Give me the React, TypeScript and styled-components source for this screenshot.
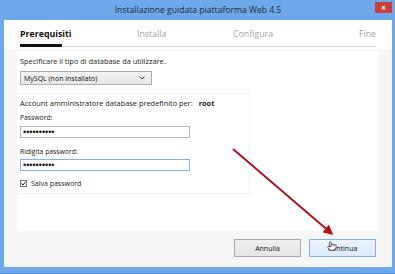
import React from 'react'
import styled, { createGlobalStyle } from 'styled-components'
import { Pointer } from 'lucide-react'

const GlobalStyle = createGlobalStyle`
  html, body {
    margin: 0;
    padding: 0;
    background: #ffffff;
  }
  body {
    font-family: "Open Sans", "Noto Sans", sans-serif;
    color: #1c1c1c;
  }
`

const Window = styled.div`
  position: relative;
  width: 395px;
  height: 274px;
  box-sizing: border-box;
  background: #6fa8ea;
  padding: 0 3px 6px 4px;
  display: flex;
  flex-direction: column;
  border-bottom: 1px solid #4f8fd6;
`

const TitleBar = styled.div`
  height: 20px;
  display: flex;
  align-items: center;
  justify-content: center;
  position: relative;
  font-size: 8.6px;
  color: #1e2a38;
`

const CloseButton = styled.div`
  position: absolute;
  right: 0;
  top: 2px;
  width: 17px;
  height: 11px;
  background: #c7403a;
  color: #fff;
  font-size: 8px;
  font-weight: bold;
  display: flex;
  align-items: center;
  justify-content: center;
`

const Client = styled.div`
  flex: 1;
  background: #f6f6f6;
  display: flex;
  flex-direction: column;
`

const Header = styled.div`
  background: #ffffff;
  padding: 6px 16px 2px 16px;
`

const Steps = styled.div`
  display: grid;
  grid-template-columns: 117px 96px 1fr auto;
  align-items: center;
  height: 16px;
`

const Step = styled.span<{ $active?: boolean }>`
  font-size: 8.8px;
  font-weight: ${p => (p.$active ? 700 : 400)};
  color: ${p => (p.$active ? '#111' : '#a3a3a3')};
`

const Track = styled.div`
  position: relative;
  height: 3px;
  margin-top: 2px;
  display: flex;
  align-items: flex-end;
`

const TrackLine = styled.div`
  flex: 1;
  height: 1px;
  background: #cfd8e2;
`

const TrackDone = styled.div`
  width: 42px;
  height: 3px;
  background: #111;
`

const Body = styled.div`
  flex: 1;
  display: flex;
  flex-direction: column;
  padding: 2px 14px 0 13px;
`

const Panel = styled.div`
  background: #ffffff;
  height: 180px;
  padding: 6px 3px 0 3px;
  box-sizing: border-box;
`

const Label = styled.div<{ $small?: boolean }>`
  font-size: ${p => (p.$small ? '6.8px' : '7.4px')};
  color: #222;
  line-height: 1.1;
`

const Select = styled.div`
  margin-top: 6px;
  width: 132px;
  height: 14px;
  box-sizing: border-box;
  border: 1px solid #acacac;
  background: linear-gradient(#f4f4f4, #e6e6e6);
  display: flex;
  align-items: center;
  justify-content: space-between;
  padding: 0 6px 0 3px;
  font-size: 7px;
  color: #111;
`

const Account = styled.div`
  margin-top: 8px;
  margin-left: -3px;
  width: 233px;
  padding: 5px 3px 5px 3px;
  border-top: 1px solid #f4f4f4;
  border-right: 1px solid #f2f2f2;
  border-bottom: 1px solid #f4f4f4;
  box-sizing: border-box;
`

const Root = styled.b`
  margin-left: 6px;
  font-weight: 700;
`

const Field = styled.div<{ $space: number }>`
  margin-top: ${p => p.$space}px;
  display: flex;
  flex-direction: column;
  gap: 4px;
`

const PasswordBox = styled.input<{ $focus?: boolean }>`
  width: 170px;
  height: 12px;
  box-sizing: border-box;
  border: 1px solid ${p => (p.$focus ? '#7eb4ea' : '#b5b8be')};
  padding: 0 2px;
  margin: 0;
  font-size: 9px;
  letter-spacing: 0;
  color: #111;
  background: #fff;
  outline: none;
`

const CheckRow = styled.label`
  margin-top: 8px;
  display: flex;
  align-items: center;
  gap: 4px;
  font-size: 7px;
  color: #222;
`

const CheckBox = styled.span`
  width: 7px;
  height: 7px;
  box-sizing: border-box;
  border: 1px solid #707070;
  background: #fff;
  display: flex;
  align-items: center;
  justify-content: center;
`

const Footer = styled.div`
  flex: 1;
  display: flex;
  justify-content: flex-end;
  align-items: flex-start;
  gap: 8px;
  padding: 8px 2px 0 0;
`

const Button = styled.div<{ $primary?: boolean }>`
  width: 67px;
  height: 18px;
  box-sizing: border-box;
  border: 1px solid ${p => (p.$primary ? '#7eb4ea' : '#acacac')};
  background: ${p => (p.$primary ? 'linear-gradient(#ecf4fc, #dcecfc)' : 'linear-gradient(#f0f0f0, #e5e5e5)')};
  font-size: 7px;
  color: #111;
  display: flex;
  align-items: center;
  justify-content: center;
`

const Overlay = styled.svg`
  position: absolute;
  left: 0;
  top: 0;
  pointer-events: none;
`

const Cursor = styled.div`
  position: absolute;
  left: 327px;
  top: 241px;
  display: flex;
`

export default function App() {
  return (
    <>
      <GlobalStyle />
      <Window>
        <TitleBar>
          Installazione guidata piattaforma Web 4.5
          <CloseButton>×</CloseButton>
        </TitleBar>
        <Client>
          <Header>
            <Steps>
              <Step $active>Prerequisiti</Step>
              <Step>Installa</Step>
              <Step>Configura</Step>
              <Step>Fine</Step>
            </Steps>
            <Track>
              <TrackDone />
              <TrackLine />
            </Track>
          </Header>
          <Body>
            <Panel>
              <Label>Specificare il tipo di database da utilizzare.</Label>
              <Select>
                <span>MySQL (non installato)</span>
                <svg width="6" height="4" viewBox="0 0 6 4">
                  <path d="M0.5 0.5 L3 3 L5.5 0.5" fill="none" stroke="#333" strokeWidth="1" />
                </svg>
              </Select>
              <Account>
                <Label>
                  Account amministratore database predefinito per:<Root>root</Root>
                </Label>
                <Field $space={7}>
                  <Label $small>Password:</Label>
                  <PasswordBox type="password" readOnly value="mysqlpass1" />
                </Field>
                <Field $space={10}>
                  <Label $small>Ridigita password:</Label>
                  <PasswordBox $focus type="password" readOnly value="mysqlpass1" />
                </Field>
                <CheckRow>
                  <CheckBox>
                    <svg width="5" height="5" viewBox="0 0 5 5">
                      <path d="M0.5 2.5 L2 4 L4.5 0.8" fill="none" stroke="#222" strokeWidth="1" />
                    </svg>
                  </CheckBox>
                  Salva password
                </CheckRow>
              </Account>
            </Panel>
            <Footer>
              <Button>Annulla</Button>
              <Button $primary>Continua</Button>
            </Footer>
          </Body>
        </Client>
        <Overlay width="395" height="274" viewBox="0 0 395 274">
          <defs>
            <marker id="head" markerWidth="5" markerHeight="5" refX="3.5" refY="2.5" orient="auto">
              <path d="M0 0 L5 2.5 L0 5 Z" fill="#b3121a" />
            </marker>
          </defs>
          <line x1="233" y1="149" x2="331" y2="233" stroke="#b3121a" strokeWidth="2" markerEnd="url(#head)" />
        </Overlay>
        <Cursor>
          <Pointer size={10} fill="#fff" color="#222" strokeWidth={1.6} />
        </Cursor>
      </Window>
    </>
  )
}
